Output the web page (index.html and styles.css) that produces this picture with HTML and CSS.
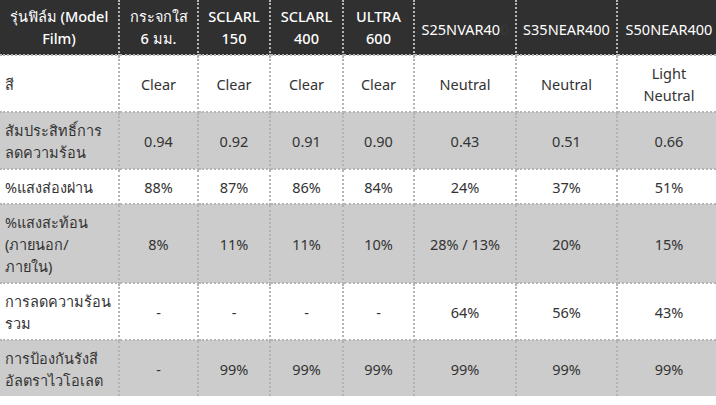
FILE: index.html
```html
<!DOCTYPE html>
<html lang="th">
<head>
<meta charset="utf-8">
<link rel="stylesheet" href="styles.css">
</head>
<body>
<div class="wrap">
<table class="spec">
  <colgroup>
    <col class="c1"><col class="c2"><col class="c3"><col class="c4"><col class="c5"><col class="c6"><col class="c7"><col class="c8">
  </colgroup>
  <thead>
    <tr>
      <th>รุ่นฟิล์ม (Model Film)</th>
      <th>กระจกใส 6&nbsp;มม.</th>
      <th>SCLARL 150</th>
      <th>SCLARL 400</th>
      <th>ULTRA 600</th>
      <th class="normal">S25NVAR40<span class="dim">0</span></th>
      <th class="normal">S35NEAR400</th>
      <th class="normal">S50NEAR400</th>
    </tr>
  </thead>
  <tbody>
    <tr class="white">
      <td class="label">สี</td>
      <td>Clear</td><td>Clear</td><td>Clear</td><td>Clear</td><td>Neutral</td><td>Neutral</td><td>Light Neutral</td>
    </tr>
    <tr class="grey">
      <td class="label">สัมประสิทธิ์การลดความร้อน</td>
      <td>0.94</td><td>0.92</td><td>0.91</td><td>0.90</td><td>0.43</td><td>0.51</td><td>0.66</td>
    </tr>
    <tr class="white">
      <td class="label">%แสงส่องผ่าน</td>
      <td>88%</td><td>87%</td><td>86%</td><td>84%</td><td>24%</td><td>37%</td><td>51%</td>
    </tr>
    <tr class="grey">
      <td class="label">%แสงสะท้อน (ภายนอก/ภายใน)</td>
      <td>8%</td><td>11%</td><td>11%</td><td>10%</td><td>28% / 13%</td><td>20%</td><td>15%</td>
    </tr>
    <tr class="white">
      <td class="label">การลดความร้อนรวม</td>
      <td>-</td><td>-</td><td>-</td><td>-</td><td>64%</td><td>56%</td><td>43%</td>
    </tr>
    <tr class="grey">
      <td class="label">การป้องกันรังสีอัลตราไวโอเลต</td>
      <td>-</td><td>99%</td><td>99%</td><td>99%</td><td>99%</td><td>99%</td><td>99%</td>
    </tr>
  </tbody>
</table>
</div>
</body>
</html>
```
FILE: styles.css
```css
html, body {
  margin: 0;
  padding: 0;
  background: #ffffff;
  overflow: hidden;
}
.wrap {
  width: 716px;
  height: 405px;
  overflow: hidden;
}
.spec {
  border-collapse: collapse;
  border-style: hidden;
  table-layout: fixed;
  width: 720px;
  font-family: "Noto Sans", "Open Sans", sans-serif;
  font-size: 14.5px;
  line-height: 22px;
  color: #333333;
}
.c1 { width: 119px; }
.c2 { width: 79px; }
.c3 { width: 72px; }
.c4 { width: 73px; }
.c5 { width: 71px; }
.c6 { width: 102px; }
.c7 { width: 101px; }
.c8 { width: 103px; }
.spec th, .spec td {
  border: 2px dotted #b4b4b4;
  padding: 5.5px 8px;
  text-align: center;
  vertical-align: middle;
}
.spec th {
  background: #303030;
  color: #ffffff;
  font-weight: 500;
  padding: 5px 3px;
}
.spec th.normal {
  font-weight: 400;
  padding-top: 9px;
}
.dim { color: #3a3a3a; }
.white td { background: #ffffff; }
.grey td { background: #cccccc; }
.spec td.label {
  text-align: left;
  padding-left: 5px;
  padding-right: 3px;
}
```
